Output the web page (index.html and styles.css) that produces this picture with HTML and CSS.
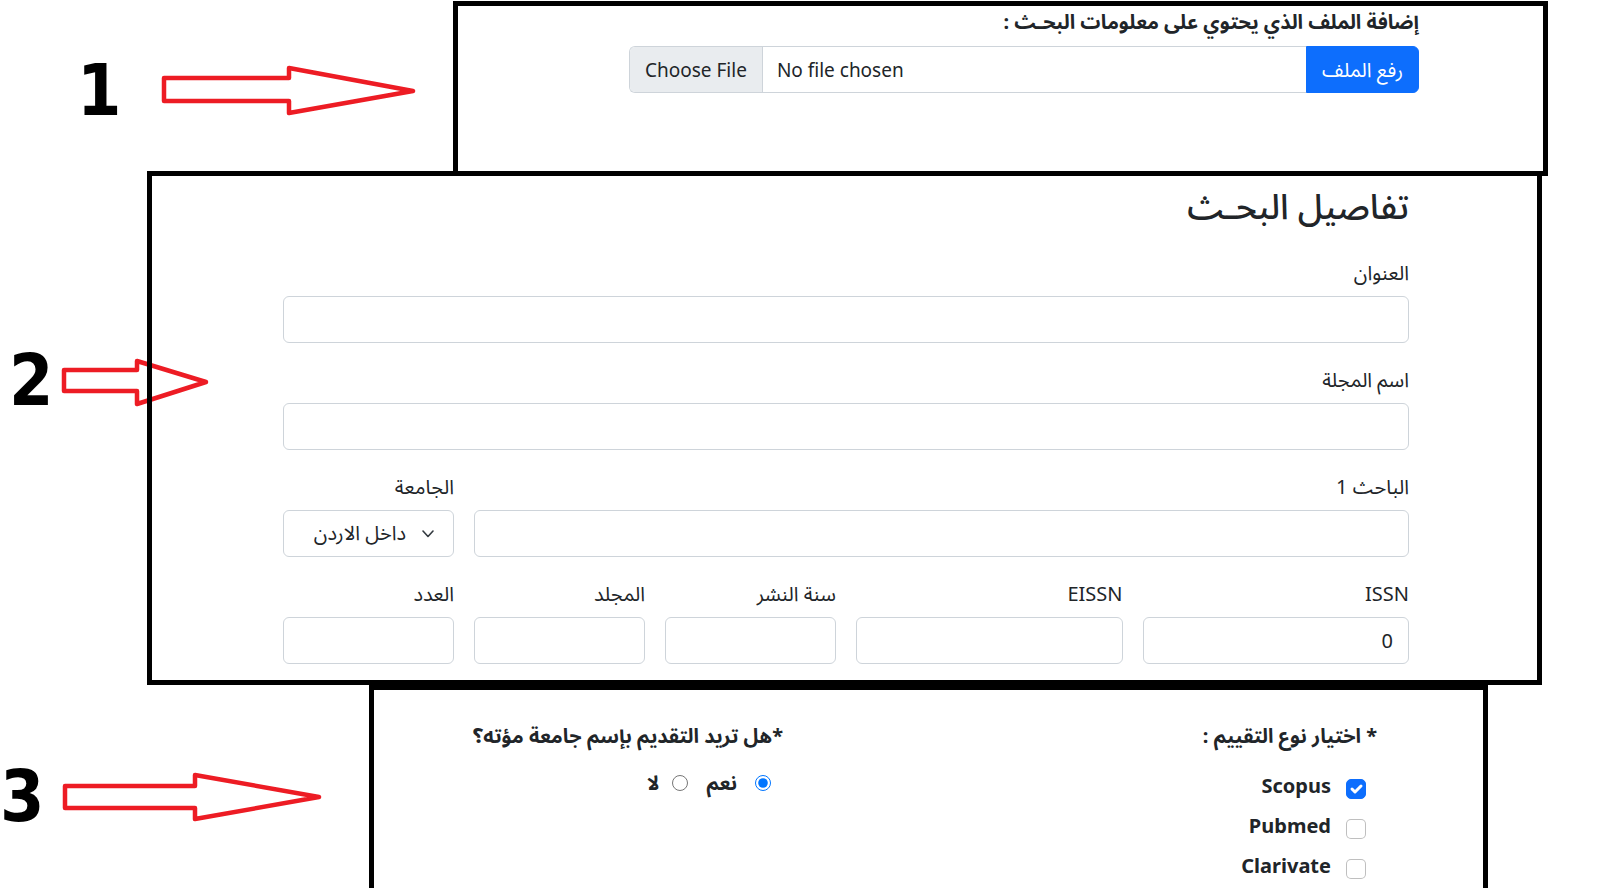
FILE: index.html
```html
<!DOCTYPE html>
<html lang="ar">
<head>
<meta charset="utf-8">
<title>تفاصيل البحث</title>
<link rel="stylesheet" href="styles.css">
</head>
<body>
<div class="page">
  <section class="row row-1">
    <div class="annot annot-1">
      <span class="num num-1">1</span>
      <svg class="arrow arrow-1" width="262" height="56" viewBox="159 62 262 56"><polygon points="164,78 289,78 289,68 413,91 289,113 289,101 164,101"/></svg>
    </div>
    <div class="box box-1" dir="rtl">
      <label class="upload-label" for="file">إضافة الملف الذي يحتوي على معلومات البحـث :</label>
      <div class="input-group">
        <button class="btn-upload" type="button">رفع الملف</button>
        <input id="file" class="file-input" type="file" dir="ltr">
      </div>
    </div>
  </section>

  <section class="row row-2">
    <div class="annot annot-2">
      <span class="num num-2">2</span>
      <svg class="arrow arrow-2" width="152" height="54" viewBox="59 356 152 54"><polygon points="64,370 137,370 137,361 206,382 137,404 137,391 64,391"/></svg>
    </div>
    <div class="box box-2" dir="rtl">
      <h3 class="title">تفاصيل البحـث</h3>
      <div class="field">
        <label class="field-label">العنوان</label>
        <input class="control" type="text">
      </div>
      <div class="field">
        <label class="field-label">اسم المجلة</label>
        <input class="control" type="text">
      </div>
      <div class="grid field">
        <div class="span-10">
          <label class="field-label">الباحث 1</label>
          <input class="control" type="text">
        </div>
        <div class="span-2">
          <label class="field-label">الجامعة</label>
          <div class="control select">
            <svg class="chevron" width="12" height="8" viewBox="0 0 12 8"><polyline points="1,1 6,6.5 11,1"/></svg>
            <span>داخل الاردن</span>
          </div>
        </div>
      </div>
      <div class="grid">
        <div class="span-3">
          <label class="field-label">ISSN</label>
          <input class="control" type="text" value="0">
        </div>
        <div class="span-3">
          <label class="field-label">EISSN</label>
          <input class="control" type="text">
        </div>
        <div class="span-2">
          <label class="field-label">سنة النشر</label>
          <input class="control" type="text">
        </div>
        <div class="span-2">
          <label class="field-label">المجلد</label>
          <input class="control" type="text">
        </div>
        <div class="span-2">
          <label class="field-label">العدد</label>
          <input class="control" type="text">
        </div>
      </div>
    </div>
  </section>

  <section class="row row-3">
    <div class="annot annot-3">
      <span class="num num-3">3</span>
      <svg class="arrow arrow-3" width="264" height="54" viewBox="60 770 264 54"><polygon points="65,786 195,786 195,775 319,797 195,819 195,808 65,808"/></svg>
    </div>
    <div class="box box-3" dir="rtl">
      <div class="eval">
        <div class="col-rating">
          <p class="q-title">* اختيار نوع التقييم :</p>
          <div class="checks">
            <div class="check-row"><span class="check checked"><svg width="20" height="20" viewBox="0 0 20 20"><path d="m6 10 3 3 6-6"/></svg></span><span class="check-text">Scopus</span></div>
            <div class="check-row"><span class="check"></span><span class="check-text">Pubmed</span></div>
            <div class="check-row"><span class="check"></span><span class="check-text">Clarivate</span></div>
          </div>
        </div>
        <div class="col-question">
          <p class="q-title">*هل تريد التقديم بإسم جامعة مؤته؟</p>
          <div class="radios">
            <label class="radio-opt"><input type="radio" name="mutah" checked><span>نعم</span></label>
            <label class="radio-opt radio-no"><input type="radio" name="mutah"><span>لا</span></label>
          </div>
        </div>
      </div>
    </div>
  </section>
</div>
</body>
</html>
```

FILE: styles.css
```css
html, body {
  margin: 0;
  padding: 0;
  background: #fff;
}
body {
  font-family: "Noto Sans", "Noto Sans Arabic", "DejaVu Sans", sans-serif;
  color: #212529;
  overflow: hidden;
}

.row {
  display: flex;
  align-items: flex-start;
}
.row-1 { margin-top: 1px; }
.row-2 { margin-top: -5px; }

/* annotations (numbers + red arrows) */
.annot {
  flex: none;
  display: grid;
}
.annot > * {
  grid-area: 1 / 1;
  align-self: start;
  justify-self: start;
}
.annot-1 { width: 453px; }
.annot-2 { width: 147px; }
.annot-3 { width: 369px; }

.num {
  font-family: "DejaVu Sans Condensed", "DejaVu Sans", sans-serif;
  font-stretch: condensed;
  font-weight: 700;
  font-size: 71px;
  line-height: 1;
  color: #000;
}
.num-1 { margin: 54px 0 0 77px; }
.num-2 { margin: 174px 0 0 9px; }
.num-3 { margin: 76px 0 0 0; }

.arrow { display: block; overflow: visible; }
.arrow polygon {
  fill: none;
  stroke: #ed1c24;
  stroke-width: 4.5;
  stroke-linejoin: round;
}
.arrow-1 { margin: 61px 0 0 159px; }
.arrow-2 { margin: 185px 0 0 59px; }
.arrow-3 { margin: 85px 0 0 60px; }

/* framed boxes */
.box {
  flex: none;
  box-sizing: border-box;
  border: 5px solid #000;
}
.box-1 {
  width: 1095px;
  height: 175px;
  padding: 1px 124px 0 0;
}
.box-2 {
  width: 1395px;
  height: 514px;
  padding: 9px 128px 0 131px;
}
.box-3 {
  width: 1119px;
  height: 240px;
  padding: 31px 106px 0 0;
}

/* box 1: upload */
.upload-label {
  display: block;
  font-weight: 700;
  font-size: 20px;
  line-height: 30px;
  margin-bottom: 9px;
}
.input-group {
  display: flex;
  width: 790px;
  height: 47px;
}
.btn-upload {
  flex: none;
  height: 47px;
  padding: 0 15px;
  border: 1px solid #0d6efd;
  background: #0d6efd;
  color: #fff;
  font: inherit;
  font-size: 20px;
  line-height: 30px;
  border-radius: 0 6px 6px 0;
}
.file-input {
  flex: 1;
  min-width: 0;
  box-sizing: border-box;
  height: 47px;
  margin: 0;
  padding: 7.5px 15px;
  border: 1px solid #ced4da;
  border-right: 0;
  border-radius: 6px 0 0 6px;
  background: #fff;
  color: #212529;
  font: inherit;
  font-size: 19px;
  line-height: 30px;
  overflow: hidden;
}
.file-input::file-selector-button {
  padding: 7.5px 15px;
  margin: -7.5px 14px -7.5px -15px;
  border: 0;
  border-right: 1px solid #ced4da;
  border-radius: 0;
  background: #e9ecef;
  color: #212529;
  font: inherit;
}

/* box 2: details */
.title {
  margin: 0 0 31px;
  font-size: 35px;
  font-weight: 500;
  line-height: 42px;
}
.field { margin-bottom: 22px; }
.field-label {
  display: block;
  font-size: 20px;
  line-height: 30px;
  margin-bottom: 8px;
}
.control {
  display: block;
  width: 100%;
  height: 47px;
  box-sizing: border-box;
  margin: 0;
  padding: 0 15px;
  border: 1px solid #ced4da;
  border-radius: 6px;
  background: #fff;
  color: #212529;
  font: inherit;
  font-size: 20px;
}
.grid {
  display: grid;
  grid-template-columns: repeat(12, 1fr);
  column-gap: 20px;
}
.span-10 { grid-column: span 10; }
.span-3 { grid-column: span 3; }
.span-2 { grid-column: span 2; }

.select {
  display: flex;
  align-items: center;
  gap: 16px;
  padding: 0 19px 0 10px;
}
.chevron { flex: none; }
.chevron polyline {
  fill: none;
  stroke: #343a40;
  stroke-width: 1.6;
  stroke-linecap: round;
  stroke-linejoin: round;
}

/* box 3: evaluation */
.eval { display: flex; }
.col-rating { flex: none; width: 500px; }
.col-question { margin-right: 94px; }
.q-title {
  margin: 0;
  font-weight: 700;
  font-size: 20px;
  line-height: 30px;
}
.checks {
  margin-top: 18px;
  margin-right: 11px;
}
.check-row {
  display: flex;
  align-items: center;
  gap: 15px;
  height: 40px;
  font-weight: 700;
  font-size: 20px;
}
.check-text {
  line-height: 30px;
  margin-bottom: 7px;
}
.check {
  flex: none;
  width: 20px;
  height: 20px;
  box-sizing: border-box;
  border: 1px solid rgba(0, 0, 0, 0.25);
  border-radius: 5px;
  background: #fff;
  display: flex;
}
.check.checked {
  background: #0d6efd;
  border-color: #0d6efd;
}
.check svg { margin: -1px; }
.check path {
  fill: none;
  stroke: #fff;
  stroke-width: 3;
  stroke-linecap: round;
  stroke-linejoin: round;
}
.radios {
  display: flex;
  align-items: center;
  margin-top: 17px;
  margin-right: 12px;
  font-weight: 700;
  font-size: 20px;
  line-height: 30px;
}
.radio-opt {
  display: inline-flex;
  align-items: center;
  gap: 18px;
}
.radio-opt input {
  width: 16px;
  height: 16px;
  margin: 0;
}
.radio-no {
  gap: 13px;
  margin-right: 18px;
}
```
